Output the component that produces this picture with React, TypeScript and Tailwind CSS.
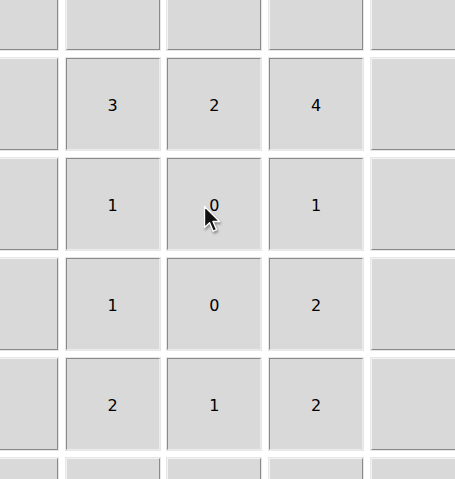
const ROWS: (number | null)[][] = [
  [null, null, null, null, null],
  [null, 3, 2, 4, null],
  [null, 1, 0, 1, null],
  [null, 1, 0, 2, null],
  [null, 2, 1, 2, null],
  [null, null, null, null, null],
];

function Cell({ value }: { value: number | null }) {
  const open = value !== null;
  return (
    <div className="border border-[#e6e6e6] bg-[#d9d9d9]">
      <div
        className={
          open
            ? "h-full flex items-center justify-center pt-[3px] border border-t-[#8a8a8a] border-l-[#8a8a8a] border-b-[#ececec] border-r-[#ececec] text-[16px] text-black"
            : "h-full border border-t-[#f3f3f3] border-l-[#f3f3f3] border-b-[#8a8a8a] border-r-[#8a8a8a]"
        }
      >
        {open ? value : null}
      </div>
    </div>
  );
}

function Pointer() {
  return (
    <svg
      className="absolute left-[203px] top-[205px] drop-shadow-[1px_2px_1px_rgba(0,0,0,0.35)]"
      width="20"
      height="30"
      viewBox="0 0 20 30"
    >
      <path
        d="M1.5 1.5 L1.5 22.5 L6.6 17.8 L10.2 26.2 L13.6 24.7 L10 16.5 L16.6 16.5 Z"
        fill="#111"
        stroke="#fff"
        strokeWidth="1.4"
        strokeLinejoin="round"
      />
    </svg>
  );
}

export default function App() {
  return (
    <div className="relative w-[455px] h-[479px] overflow-hidden bg-white font-['DejaVu_Sans',sans-serif]">
      <div className="-ml-[37px] -mt-[43px] grid grid-cols-[repeat(5,96px)] grid-rows-[repeat(6,94px)] gap-x-[5.67px] gap-y-[6px]">
        {ROWS.flatMap((row, r) =>
          row.map((v, c) => <Cell key={`${r}-${c}`} value={v} />)
        )}
      </div>
      <Pointer />
    </div>
  );
}
